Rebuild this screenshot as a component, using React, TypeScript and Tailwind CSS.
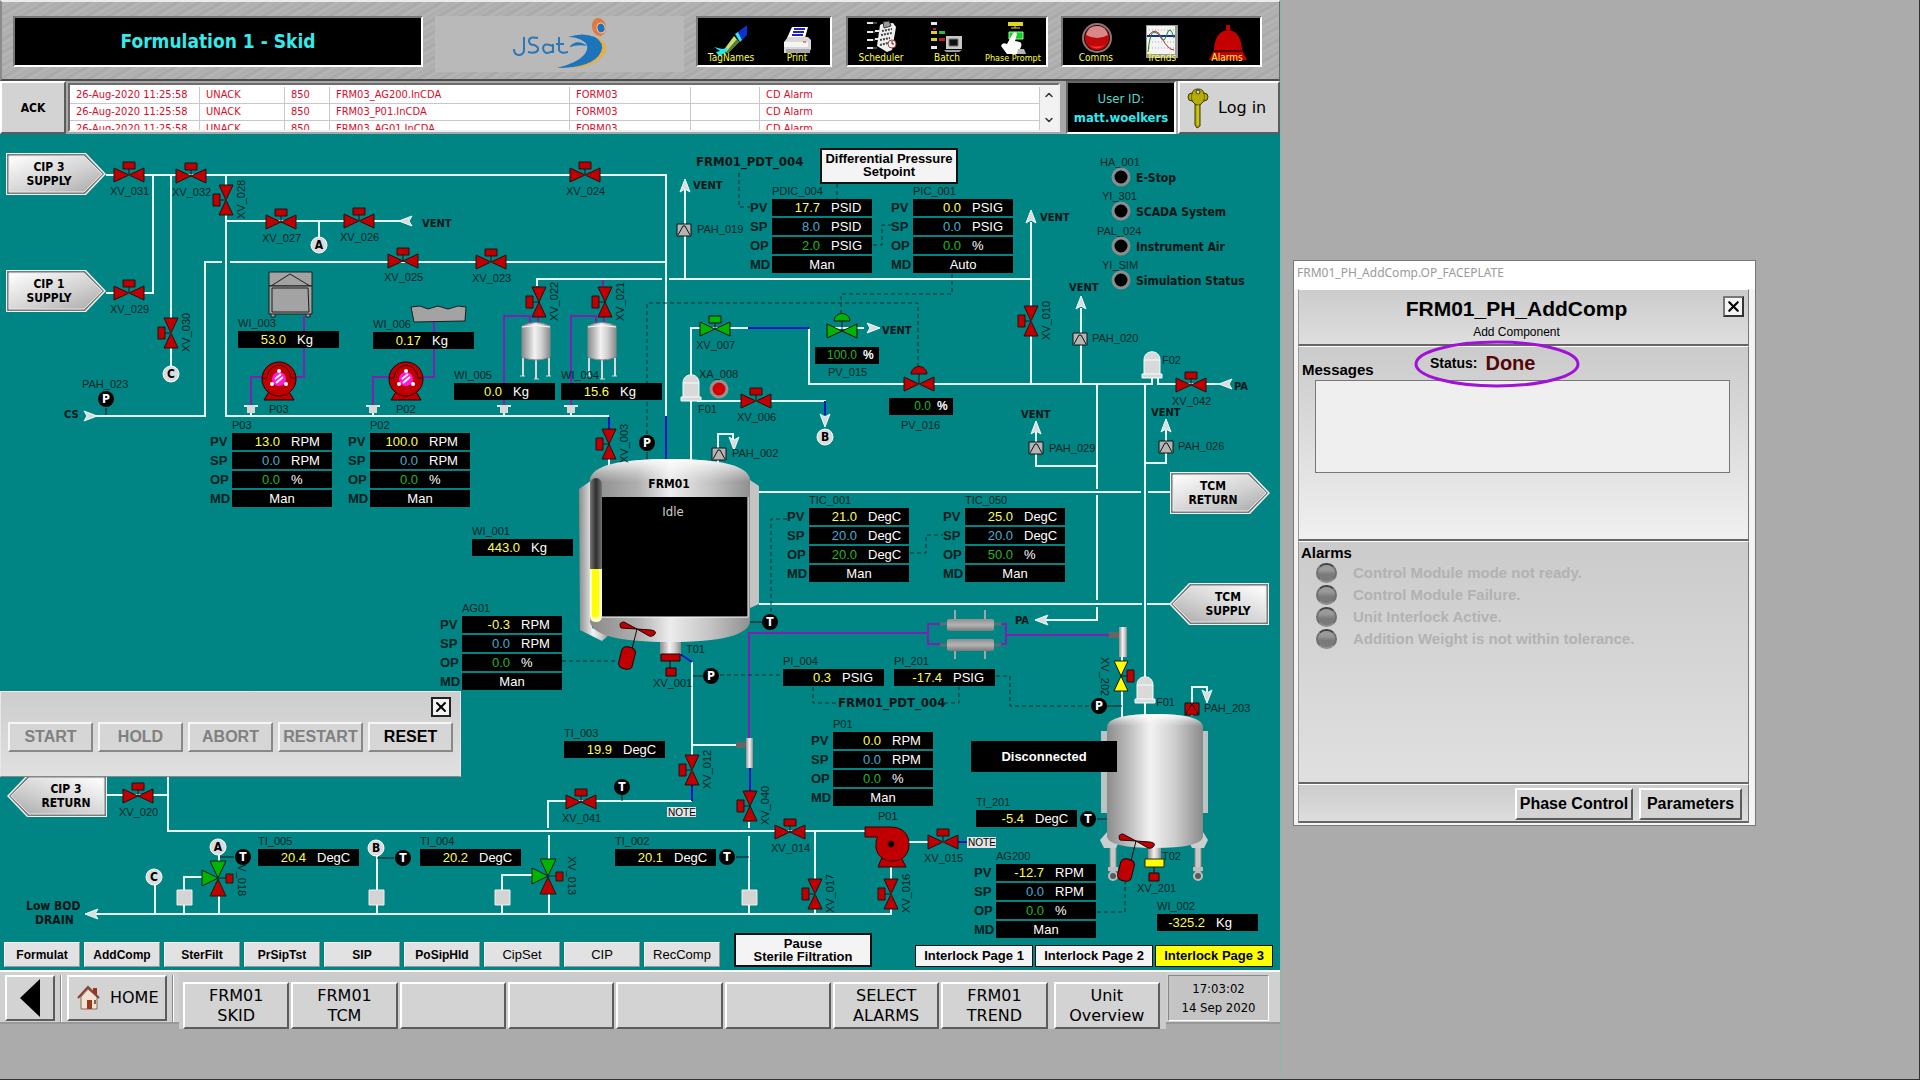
import type { ReactNode } from "react";
import clsx from "clsx";
import { ChevronDown, ChevronUp, X } from "lucide-react";

const TAHOMA = "font-['DejaVu_Sans_Condensed','DejaVu_Sans',sans-serif]";
const VERDANA = "font-['DejaVu_Sans',sans-serif]";
const RAISED =
  "border-2 border-t-white border-l-white border-b-[#5c5c5c] border-r-[#5c5c5c] bg-[#d3d3d3]";

const RED = "#c00000";
const GREEN = "#00b400";

// The mimic uses screen coordinates; the canvas itself starts below the alarm bar.
const CANVAS_TOP = 134;

/* ------------------------------------------------------------------ */
/* Mimic data                                                          */
/* ------------------------------------------------------------------ */

const WHITE_PIPES = [
  "M106 175H667M153 175V293H106M171 175V366M226 175V416H609",
  "M226 221H402M319 221V238",
  "M95 416H205V262H222M230 262H666",
  "M666 174V416",
  "M537 286V279H662M669 279H1031",
  "M685 190V279M1031 222V384M1081 308V384",
  "M691 377V328H748M809 329V384H1152V376M1158 376V384H1222",
  "M691 401V462M697 401H826M828 328H864",
  "M718 464V434H733V440M609 458V466",
  "M1036 432V466H1097M1166 430V463H1145",
  "M1097 384V489M1097 495V600M1097 607V620H1046",
  "M1145 384V716",
  "M759 492H1141M1148 492H1170M759 604H1142M1147 604H1170",
  "M692 662V786M692 745H736M692 801H548V828M549 835V862M749 822V828M749 836V914",
  "M107 795H168M168 776V831H866M815 831V914M891 866V914M908 842H959",
  "M96 914H892",
  "M155 884V914M184 914V877H204M219 855V864M219 894V914M377 855V914M502 914V875H534M549 892V914",
  "M1122 656V664M1122 690V720M1192 716V687H1207V692",
];

const BLUE_PIPES = ["M666 416V460", "M748 328H809", "M825 401V415", "M609 417V430", "M680 654L692 662", "M692 785V801", "M750 768V792", "M958 842H968"];

const PURPLE_PIPES = [
  "M304 316V377H294M264 377H251V405",
  "M434 322V377H422M390 377H373V405",
  "M537 280V288M603 280V288",
  "M504 405V316H530V323M538 316V323M571 405V316H596V323M604 316V323",
  "M749 738V633H928M942 624H928V644H942M1000 624H1006V644H1000M1006 635H1110",
];

const SIGNALS = [
  "M739 173V207H750",
  "M837 184V199",
  "M873 245H882V225H892",
  "M647 434V303H918V366",
  "M841 314V294H952V274",
  "M771 612V519H787",
  "M910 553H926V535H943",
  "M562 661H616",
  "M720 675H783",
  "M813 687V703H837",
  "M944 703H959V687",
  "M996 676H1010V706H1090",
  "M1097 912H1125V882",
];

const STEMS = ["M106 408V415", "M647 452V460", "M750 622H762", "M693 676H703", "M622 795V801", "M220 857H234", "M377 858H394", "M736 857H749", "M1107 706H1122", "M1097 819H1107"];

type ValveSpec = {
  tag: string;
  x: number;
  y: number;
  turn?: "up" | "left" | "right";
  fill?: string;
  dome?: boolean;
  tx: number;
  ty: number;
};

// tx/ty is where the tag's baseline starts
const VALVES: ValveSpec[] = [
  { tag: "XV_031", x: 129, y: 175, tx: 110, ty: 195 },
  { tag: "XV_032", x: 191, y: 176, tx: 172, ty: 196 },
  { tag: "XV_024", x: 585, y: 175, tx: 566, ty: 195 },
  { tag: "XV_028", x: 226, y: 200, turn: "left", tx: 245, ty: 219 },
  { tag: "XV_027", x: 281, y: 222, tx: 262, ty: 242 },
  { tag: "XV_026", x: 359, y: 221, tx: 340, ty: 241 },
  { tag: "XV_025", x: 403, y: 261, tx: 384, ty: 281 },
  { tag: "XV_023", x: 491, y: 262, tx: 472, ty: 282 },
  { tag: "XV_029", x: 129, y: 293, tx: 110, ty: 313 },
  { tag: "XV_030", x: 171, y: 333, turn: "left", tx: 190, ty: 352 },
  { tag: "XV_022", x: 539, y: 302, turn: "left", tx: 558, ty: 321 },
  { tag: "XV_021", x: 605, y: 302, turn: "left", tx: 624, ty: 321 },
  { tag: "XV_003", x: 609, y: 444, turn: "left", tx: 628, ty: 463 },
  { tag: "XV_007", x: 715, y: 329, fill: GREEN, tx: 696, ty: 349 },
  { tag: "XV_006", x: 756, y: 401, tx: 737, ty: 421 },
  { tag: "PV_015", x: 842, y: 331, fill: GREEN, dome: true, tx: 828, ty: 376 },
  { tag: "PV_016", x: 919, y: 384, dome: true, tx: 901, ty: 429 },
  { tag: "XV_010", x: 1031, y: 321, turn: "left", tx: 1050, ty: 340 },
  { tag: "XV_042", x: 1191, y: 385, tx: 1172, ty: 405 },
  { tag: "XV_012", x: 692, y: 770, turn: "left", tx: 711, ty: 789 },
  { tag: "XV_040", x: 750, y: 806, turn: "left", tx: 769, ty: 825 },
  { tag: "XV_041", x: 581, y: 802, tx: 562, ty: 822 },
  { tag: "XV_020", x: 138, y: 796, tx: 119, ty: 816 },
  { tag: "XV_014", x: 790, y: 832, tx: 771, ty: 852 },
  { tag: "XV_015", x: 943, y: 842, tx: 924, ty: 862 },
  { tag: "XV_017", x: 815, y: 894, turn: "left", tx: 834, ty: 913 },
  { tag: "XV_016", x: 891, y: 894, turn: "left", tx: 910, ty: 913 },
  { tag: "XV_202", x: 1121, y: 676, turn: "right", fill: "#ffff00", tx: 1101, ty: 657 },
];

const TAGS: [string, number, number][] = [
  ["PAH_023", 82, 388],
  ["P03", 269, 413],
  ["P02", 396, 413],
  ["PAH_019", 697, 233],
  ["XA_008", 699, 378],
  ["F01", 698, 413],
  ["PAH_002", 732, 457],
  ["PAH_020", 1092, 342],
  ["PAH_029", 1049, 452],
  ["PAH_026", 1178, 450],
  ["F02", 1162, 364],
  ["HA_001", 1100, 166],
  ["YI_301", 1102, 200],
  ["PAL_024", 1097, 235],
  ["YI_SIM", 1102, 269],
  ["T01", 686, 653],
  ["XV_001", 653, 687],
  ["F01", 1156, 706],
  ["PAH_203", 1204, 712],
  ["P01", 878, 820],
  ["T02", 1162, 860],
  ["XV_201", 1137, 892],
];

const BOLD_LABELS: [string, number, number][] = [
  ["VENT", 422, 227],
  ["VENT", 693, 189],
  ["VENT", 1040, 221],
  ["VENT", 882, 334],
  ["VENT", 1069, 291],
  ["VENT", 1021, 418],
  ["VENT", 1151, 416],
  ["CS", 64, 418],
  ["PA", 1234, 390],
  ["PA", 1015, 624],
];

const STATUS_LIGHTS: [string, number][] = [
  ["E-Stop", 177],
  ["SCADA System", 211],
  ["Instrument Air", 246],
  ["Simulation Status", 280],
];

const INSTRUMENTS: [string, number, number][] = [
  ["P", 106, 399],
  ["P", 647, 443],
  ["T", 770, 622],
  ["P", 711, 676],
  ["T", 622, 787],
  ["T", 243, 857],
  ["T", 403, 858],
  ["T", 727, 857],
  ["P", 1099, 706],
  ["T", 1088, 819],
];

const CONNECTORS: [string, number, number][] = [
  ["A", 319, 245],
  ["C", 171, 374],
  ["B", 825, 437],
  ["A", 218, 847],
  ["C", 154, 877],
  ["B", 376, 848],
];

type Loop = { tag: string; x: number; y: number; pv: [string, string]; sp: [string, string]; op: [string, string]; mode: string };

const LOOPS: Loop[] = [
  { tag: "PDIC_004", x: 772, y: 199, pv: ["17.7", "PSID"], sp: ["8.0", "PSID"], op: ["2.0", "PSIG"], mode: "Man" },
  { tag: "PIC_001", x: 913, y: 199, pv: ["0.0", "PSIG"], sp: ["0.0", "PSIG"], op: ["0.0", "%"], mode: "Auto" },
  { tag: "P03", x: 232, y: 433, pv: ["13.0", "RPM"], sp: ["0.0", "RPM"], op: ["0.0", "%"], mode: "Man" },
  { tag: "P02", x: 370, y: 433, pv: ["100.0", "RPM"], sp: ["0.0", "RPM"], op: ["0.0", "%"], mode: "Man" },
  { tag: "TIC_001", x: 809, y: 508, pv: ["21.0", "DegC"], sp: ["20.0", "DegC"], op: ["20.0", "DegC"], mode: "Man" },
  { tag: "TIC_050", x: 965, y: 508, pv: ["25.0", "DegC"], sp: ["20.0", "DegC"], op: ["50.0", "%"], mode: "Man" },
  { tag: "AG01", x: 462, y: 616, pv: ["-0.3", "RPM"], sp: ["0.0", "RPM"], op: ["0.0", "%"], mode: "Man" },
  { tag: "P01", x: 833, y: 732, pv: ["0.0", "RPM"], sp: ["0.0", "RPM"], op: ["0.0", "%"], mode: "Man" },
  { tag: "AG200", x: 996, y: 864, pv: ["-12.7", "RPM"], sp: ["0.0", "RPM"], op: ["0.0", "%"], mode: "Man" },
];

const READOUTS: [string, number, number, string, string][] = [
  ["WI_003", 238, 331, "53.0", "Kg"],
  ["WI_006", 373, 332, "0.17", "Kg"],
  ["WI_005", 454, 383, "0.0", "Kg"],
  ["WI_004", 561, 383, "15.6", "Kg"],
  ["WI_001", 472, 539, "443.0", "Kg"],
  ["PI_004", 783, 669, "0.3", "PSIG"],
  ["PI_201", 894, 669, "-17.4", "PSIG"],
  ["TI_003", 564, 741, "19.9", "DegC"],
  ["TI_201", 976, 810, "-5.4", "DegC"],
  ["TI_005", 258, 849, "20.4", "DegC"],
  ["TI_004", 420, 849, "20.2", "DegC"],
  ["TI_002", 615, 849, "20.1", "DegC"],
  ["WI_002", 1157, 914, "-325.2", "Kg"],
];

/* ------------------------------------------------------------------ */
/* Mimic symbols                                                       */
/* ------------------------------------------------------------------ */

function Valve({ tag, x, y, turn = "up", fill = RED, dome, tx, ty }: ValveSpec) {
  const angle = { up: 0, left: -90, right: 90 }[turn];
  const actuator = turn === "right" ? RED : fill;
  return (
    <g>
      <g transform={`translate(${x} ${y}) rotate(${angle})`} stroke="#201010">
        <path d={dome ? "M0 -11V0" : "M0 -7V0"} />
        <path d="M-15 -7V7L0 0ZM15 -7V7L0 0Z" fill={fill} />
        {dome ? <path d="M-8 -10C-7 -20 7 -20 8 -10Z" fill={fill} /> : <path d="M-6 -13H6V-6H-6Z" fill={actuator} />}
      </g>
      <text transform={`translate(${tx} ${ty}) rotate(${angle})`} className="fill-[#002626] text-[11px]">
        {tag}
      </text>
    </g>
  );
}

function ThreeWayValve({ x, y, tag, tx, ty }: { x: number; y: number; tag: string; tx: number; ty: number }) {
  return (
    <g>
      <g transform={`translate(${x} ${y})`} stroke="#102010">
        <path d="M0 0H9" />
        <path d="M-8 -17H8L0 0Z" fill={GREEN} />
        <path d="M-16 -8V8L0 0Z" fill={GREEN} />
        <path d="M-8 18H8L0 1Z" fill={RED} />
        <path d="M8 -4H15V5H8Z" fill={RED} />
      </g>
      <text transform={`translate(${tx} ${ty}) rotate(90)`} className="fill-[#002626] text-[11px]">
        {tag}
      </text>
    </g>
  );
}

function Arrow({ x, y, dir }: { x: number; y: number; dir: "up" | "down" | "left" | "right" }) {
  const angle = { up: 0, right: 90, down: 180, left: -90 }[dir];
  return (
    <path
      transform={`translate(${x} ${y}) rotate(${angle})`}
      d="M0 0L5 13L0 10L-5 13Z"
      fill="#dcdcdc"
      stroke="#e8ffff"
    />
  );
}

function Flag({ x, y, lines, flip }: { x: number; y: number; lines: [string, string]; flip?: boolean }) {
  return (
    <g transform={`translate(${x} ${y})`}>
      <g transform={flip ? "translate(100 0) scale(-1 1)" : undefined}>
        <path d="M0 0H80L100 21L80 42H0Z" fill="#f2f2f2" />
        <path d="M1 1H79L98 21L79 41H1Z" fill="#7c7c7c" />
        <path d="M3 3H78L96 21L78 39H3Z" fill="url(#flag)" stroke="#e8e8e8" />
      </g>
      <g textAnchor="middle" className={clsx(TAHOMA, "fill-black text-[12px] font-bold")}>
        <text x={flip ? 59 : 43} y={18}>{lines[0]}</text>
        <text x={flip ? 59 : 43} y={32}>{lines[1]}</text>
      </g>
    </g>
  );
}

function FilterHousing({ x, y }: { x: number; y: number }) {
  return (
    <g transform={`translate(${x} ${y})`} fill="#d9d9d9" stroke="#f4ffff">
      <path d="M-8 23V8C-8 -3 8 -3 8 8V23Z" />
      <path d="M-8 8H8" />
      <path d="M-10 22H10V26H-10Z" />
    </g>
  );
}

function PressureSwitch({ x, y, fill = "#b4b4b4" }: { x: number; y: number; fill?: string }) {
  return (
    <g transform={`translate(${x} ${y})`} stroke="#111" fill={fill}>
      <path d="M-7 -6H7V6H-7Z" />
      <path d="M-6 5L-1 -4H1L6 5" fill="none" />
    </g>
  );
}

function Cup({ x }: { x: number }) {
  return (
    <g>
      <path d={`M${x} 413V416M${x - 7} 406H${x + 7}`} stroke="#e8ffff" strokeWidth="2" />
      <path d={`M${x - 4} 405H${x + 4}V413H${x - 4}Z`} fill="#d9d9d9" />
    </g>
  );
}

function HosePump({ x, y }: { x: number; y: number }) {
  return (
    <g transform={`translate(${x} ${y})`}>
      <path d="M-9 11L-15 21H15L9 11Z" fill={RED} stroke="#200" />
      <circle r="17" fill={RED} stroke="#200" />
      <path d="M-17 -1H-12C-10 -18 10 -18 12 -1H17" fill="none" stroke="#300" />
      <circle r="7" fill="#ff1ad9" />
      <path d="M-4 0L2 -5M-3 4L4 -2" stroke="#fff" strokeWidth="2" />
      <circle cx="0" cy="-8" r="2" fill="#fff" />
      <circle cx="-7" cy="5" r="2" fill="#fff" />
      <circle cx="7" cy="5" r="2" fill="#fff" />
    </g>
  );
}

function SmallTank({ x }: { x: number }) {
  return (
    <g transform={`translate(${x} 322)`}>
      <path d="M-13 36V54M0 38V57M13 36V54" stroke="#d8d8d8" strokeWidth="2" />
      <path d="M-16 54H-11M-2 57H3M10 54H15" stroke="#d8d8d8" />
      <path d="M-14 4Q0 -3 14 4V35Q0 41 -14 35Z" fill="url(#steel)" stroke="#8d8d8d" />
      <path d="M-14 5Q0 2 14 5" stroke="#fff" fill="none" />
    </g>
  );
}

function Agitator({ x, y }: { x: number; y: number }) {
  return (
    <g transform={`translate(${x} ${y})`} fill={RED} stroke="#200">
      <path d="M0 0L-16 -1Q-19 -7 -13 -7ZM0 0L14 1Q21 2 17 6Q15 8 12 7Z" />
      <path d="M0 0L-5 20" />
      <rect x="-17" y="18" width="14" height="22" rx="5" transform="rotate(14 -10 29)" />
    </g>
  );
}

function Mimic() {
  return (
    <svg
      width="1280"
      height="836"
      viewBox={`0 ${CANVAS_TOP} 1280 836`}
      className="block font-['Liberation_Sans',Arial,sans-serif]"
      aria-hidden="true"
    >
      <defs>
        <linearGradient id="flag" x1="0" y1="0" x2="1" y2="1">
          <stop offset="0" stopColor="#ffffff" />
          <stop offset="0.6" stopColor="#d0d0d0" />
          <stop offset="1" stopColor="#a8a8a8" />
        </linearGradient>
        <linearGradient id="steel">
          <stop offset="0" stopColor="#8c8c8c" />
          <stop offset="0.25" stopColor="#c2c2c2" />
          <stop offset="0.45" stopColor="#f2f2f2" />
          <stop offset="0.7" stopColor="#cfcfcf" />
          <stop offset="1" stopColor="#8a8a8a" />
        </linearGradient>
        <linearGradient id="vessel">
          <stop offset="0" stopColor="#8a8a8a" />
          <stop offset="0.3" stopColor="#b0b0b0" />
          <stop offset="0.5" stopColor="#ececec" />
          <stop offset="0.75" stopColor="#c4c4c4" />
          <stop offset="1" stopColor="#909090" />
        </linearGradient>
        <linearGradient id="dome" x1="0" y1="0" x2="0" y2="1">
          <stop offset="0" stopColor="#ffffff" stopOpacity="0.9" />
          <stop offset="0.6" stopColor="#ffffff" stopOpacity="0.3" />
          <stop offset="1" stopColor="#ffffff" stopOpacity="0" />
        </linearGradient>
        <linearGradient id="tube" x1="0" y1="0" x2="0" y2="1">
          <stop offset="0" stopColor="#8f8f8f" />
          <stop offset="0.5" stopColor="#b4b4b4" />
          <stop offset="1" stopColor="#7a7a7a" />
        </linearGradient>
        <linearGradient id="gauge">
          <stop offset="0" stopColor="#787878" />
          <stop offset="0.5" stopColor="#2e2e2e" />
          <stop offset="1" stopColor="#747474" />
        </linearGradient>
      </defs>

      <g fill="none" stroke="#7d20b4" strokeWidth="2">
        {PURPLE_PIPES.map((d) => (
          <path key={d} d={d} />
        ))}
      </g>
      <g fill="none" stroke="#e6ffff" strokeWidth="2">
        {WHITE_PIPES.map((d) => (
          <path key={d} d={d} />
        ))}
      </g>
      <g fill="none" stroke="#0018c8" strokeWidth="2">
        {BLUE_PIPES.map((d) => (
          <path key={d} d={d} />
        ))}
      </g>
      <g fill="none" stroke="#002c2c" strokeDasharray="4 3">
        {SIGNALS.map((d) => (
          <path key={d} d={d} />
        ))}
      </g>
      <g fill="none" stroke="#1a1a1a">
        {STEMS.map((d) => (
          <path key={d} d={d} />
        ))}
      </g>

      {/* powder feeder and tray above the dosing pumps */}
      <g fill="#a3a3a3" stroke="#1c1c1c">
        <path d="M269 272H312V286H269ZM271 286L290 274L310 286" />
        <path d="M269 286H312V314H269ZM272 288H308L309 312H272ZM271 314V317H275V314M306 314V317H310V314" />
        <path d="M411 307L420 306L428 309L438 306L448 309L458 306L466 307L465 321L414 322Z" />
      </g>

      {/* main vessel with heating jacket */}
      <path d="M579 489L592 480V628L610 634L602 641L580 630Z" fill="url(#steel)" />
      <path d="M750 480L759 486V604L750 608Z" fill="#c4c4c4" />
      <path d="M660 636H681V654H660Z" fill="url(#steel)" />
      <path d="M590 479Q594 459 670 459T750 479V622Q746 642 670 642T590 622Z" fill="url(#vessel)" />
      <path d="M590 479Q594 459 670 459T750 479V482H590Z" fill="url(#dome)" />
      <rect x="590" y="478" width="12" height="144" rx="6" fill="url(#gauge)" />
      <path d="M590 569H602V616Q602 622 596 622T590 616Z" fill="#ffffc8" />
      <path d="M592 569H599V615Q598 618 595 618T592 615Z" fill="#ffff00" />
      <path d="M602 497H748V617H602Z" fill="#000" />
      <path d="M748 497V617H602" fill="none" stroke="#fff" />
      <g textAnchor="middle" className={TAHOMA}>
        <text x="669" y="488" className="fill-black text-[12px] font-bold">FRM01</text>
        <text x="673" y="516" className="fill-[#d0d0d0] text-[13px]">Idle</text>
      </g>
      <g fill={RED} stroke="#200">
        <path d="M670 661V668" />
        <path d="M661 654H680V661H661Z" />
        <path d="M666 668H676V676H666Z" />
      </g>
      <Agitator x={637} y={629} />

      {/* receiving vessel on casters */}
      <path d="M1101 731H1107V813H1101ZM1203 731H1208V813H1203Z" fill="#b9c4c4" />
      <path d="M1110 840H1116V872H1110ZM1195 840H1201V872H1195Z" fill="#c8c8c8" stroke="#8c8c8c" />
      <path d="M1107 832L1100 840L1104 848H1116L1120 840ZM1203 832L1208 840L1204 848H1192L1188 840Z" fill="#c8d0d0" />
      <g fill="#5a5a5a" stroke="#bdbdbd" strokeWidth="2">
        <circle cx="1113" cy="876" r="4" />
        <circle cx="1198" cy="876" r="4" />
        <path d="M1108 869H1118M1193 869H1203" strokeWidth="4" />
      </g>
      <path d="M1148 845H1161V859H1148Z" fill="url(#steel)" />
      <path d="M1107 726Q1110 714 1155 714T1203 726V837Q1200 848 1155 848T1107 837Z" fill="url(#steel)" />
      <path d="M1107 726Q1110 714 1155 714T1203 726Z" fill="url(#dome)" />
      <path d="M1154 867V873" stroke="#200" />
      <path d="M1145 859H1164V867H1145Z" fill="#ffff00" stroke="#222" />
      <path d="M1149 873H1159V881H1149Z" fill={RED} stroke="#200" />
      <Agitator x={1136} y={841} />

      {/* heat exchanger */}
      <g stroke="#9aa8a8">
        <path d="M955 610V619M985 610V619M955 651V659M985 651V659" strokeWidth="2" />
        <path d="M940 624H1001M940 645H1001" strokeWidth="3" stroke="#5f6f6f" />
      </g>
      <rect x="947" y="619" width="47" height="12" rx="2" fill="url(#tube)" />
      <rect x="947" y="639" width="47" height="12" rx="2" fill="url(#tube)" />

      {/* sight-glass tees */}
      <path d="M736 742H747V748H736Z" fill="#666" />
      <path d="M746 738H753V768H746Z" fill="url(#steel)" />
      <path d="M1109 632H1120V638H1109Z" fill="#666" />
      <path d="M1119 627H1127V657H1119Z" fill="url(#steel)" />

      <FilterHousing x={691} y={375} />
      <FilterHousing x={1152} y={352} />
      <FilterHousing x={1145} y={677} />
      <circle cx="719" cy="389" r="8" fill="#d40000" stroke="#9a9090" strokeWidth="3" />

      <SmallTank x={536} />
      <SmallTank x={602} />
      <HosePump x={279} y={379} />
      <HosePump x={406} y={379} />
      <Cup x={251} />
      <Cup x={373} />
      <Cup x={504} />
      <Cup x={571} />

      <PressureSwitch x={684} y={230} />
      <PressureSwitch x={719} y={454} />
      <PressureSwitch x={1080} y={339} />
      <PressureSwitch x={1036} y={448} />
      <PressureSwitch x={1166} y={447} />
      <PressureSwitch x={1192} y={709} fill={RED} />

      {/* centrifugal transfer pump */}
      <g fill={RED} stroke="#300">
        <path d="M883 855L878 867H906L900 855Z" />
        <path d="M865 827H890C904 827 909 835 909 845C909 856 900 862 891 861C881 861 875 852 876 844C876 840 877 838 878 837H865Z" />
        <circle cx="891" cy="844" r="3" fill="#000" />
      </g>

      <g fill="#d4d4d4" stroke="#eee">
        <path d="M177 890H192V905H177ZM369 890H384V905H369ZM495 890H510V905H495ZM742 890H757V905H742Z" />
      </g>

      {VALVES.map((v) => (
        <Valve key={v.tag} {...v} />
      ))}
      <ThreeWayValve x={218} y={878} tag="XV_018" tx={238} ty={857} />
      <ThreeWayValve x={548} y={876} tag="XV_013" tx={568} ty={856} />

      <Arrow x={399} y={221} dir="left" />
      <Arrow x={97} y={416} dir="right" />
      <Arrow x={880} y={328} dir="right" />
      <Arrow x={685} y={179} dir="up" />
      <Arrow x={1031} y={210} dir="up" />
      <Arrow x={1081} y={296} dir="up" />
      <Arrow x={1036} y={421} dir="up" />
      <Arrow x={1166} y={419} dir="up" />
      <Arrow x={825} y={427} dir="down" />
      <Arrow x={734} y={450} dir="down" />
      <Arrow x={1207} y={703} dir="down" />
      <Arrow x={1219} y={384} dir="left" />
      <Arrow x={1035} y={620} dir="left" />
      <Arrow x={85} y={914} dir="left" />

      <Flag x={6} y={153} lines={["CIP 3", "SUPPLY"]} />
      <Flag x={6} y={270} lines={["CIP 1", "SUPPLY"]} />
      <Flag x={1170} y={472} lines={["TCM", "RETURN"]} />
      <Flag x={1169} y={583} lines={["TCM", "SUPPLY"]} flip />
      <Flag x={7} y={775} lines={["CIP 3", "RETURN"]} flip />

      <g className="fill-[#002626] text-[11px]">
        {TAGS.map(([tag, x, y]) => (
          <text key={tag + x} x={x} y={y}>{tag}</text>
        ))}
      </g>
      <g className={clsx(TAHOMA, "fill-[#001616] text-[11px] font-bold")}>
        {BOLD_LABELS.map(([label, x, y]) => (
          <text key={label + x} x={x} y={y}>{label}</text>
        ))}
      </g>
      <g className={clsx(TAHOMA, "fill-[#001616] text-[12px] font-bold")}>
        <text x="26" y="910">Low BOD</text>
        <text x="35" y="924">DRAIN</text>
        {STATUS_LIGHTS.map(([label, y]) => (
          <text key={label} x="1136" y={y + 5}>{label}</text>
        ))}
      </g>
      <g className={clsx(TAHOMA, "fill-[#001616] text-[13px] font-bold")}>
        <text x="696" y="166">FRM01_PDT_004</text>
        <text x="838" y="707">FRM01_PDT_004</text>
      </g>
      {STATUS_LIGHTS.map(([label, y]) => (
        <circle key={label} cx="1121" cy={y} r="8" fill="#000" stroke="#8c8c8c" strokeWidth="3" />
      ))}

      <g textAnchor="middle" className={clsx(TAHOMA, "text-[12px] font-bold")}>
        {INSTRUMENTS.map(([letter, x, y]) => (
          <g key={letter + x}>
            <circle cx={x} cy={y} r="8" fill="#000" />
            <text x={x} y={y + 4} fill="#fff">{letter}</text>
          </g>
        ))}
        {CONNECTORS.map(([letter, x, y]) => (
          <g key={letter + x}>
            <circle cx={x} cy={y} r="8" fill="#dcdcdc" stroke="#f4ffff" />
            <text x={x} y={y + 4} fill="#000">{letter}</text>
          </g>
        ))}
      </g>

      <path d="M667 807H696V817H667ZM967 837H996V848H967Z" fill="#e4e4e4" />
      <g textAnchor="middle" className="fill-black text-[10px]">
        <text x="682" y="816">NOTE</text>
        <text x="982" y="846">NOTE</text>
      </g>
    </svg>
  );
}

/* ------------------------------------------------------------------ */
/* Readouts placed on the mimic                                        */
/* ------------------------------------------------------------------ */

function Cell({ value, unit, tone }: { value: string; unit: string; tone: string }) {
  return (
    <div className="flex h-[17px] bg-black text-[13px] leading-[17px]">
      <span className={clsx("w-12 text-right", tone)}>{value}</span>
      <span className="ml-[11px] text-white">{unit}</span>
    </div>
  );
}

function Tag({ children }: { children: ReactNode }) {
  return <div className="text-[11px] leading-[12px] text-[#002626]">{children}</div>;
}

function LoopBlock({ loop }: { loop: Loop }) {
  return (
    <div className="absolute" style={{ left: loop.x - 22, top: loop.y - CANVAS_TOP - 14 }}>
      <div className="pb-[2px] pl-[22px]">
        <Tag>{loop.tag}</Tag>
      </div>
      <div className="grid grid-cols-[22px_100px] gap-y-[2px] text-[13px] leading-[17px]">
        <b className="text-[#002020]">PV</b>
        <Cell value={loop.pv[0]} unit={loop.pv[1]} tone="text-[#ffff50]" />
        <b className="text-[#002020]">SP</b>
        <Cell value={loop.sp[0]} unit={loop.sp[1]} tone="text-[#48aed0]" />
        <b className="text-[#002020]">OP</b>
        <Cell value={loop.op[0]} unit={loop.op[1]} tone="text-[#28b428]" />
        <b className="text-[#002020]">MD</b>
        <div className="bg-black text-center text-white">{loop.mode}</div>
      </div>
    </div>
  );
}

function PercentOut({ x, y, value }: { x: number; y: number; value: string }) {
  return (
    <div
      className="absolute flex h-[17px] w-16 bg-black text-[12px] leading-[17px]"
      style={{ left: x, top: y - CANVAS_TOP }}
    >
      <span className="w-[42px] text-right text-[#28b428]">{value}</span>
      <span className="ml-[6px] font-bold text-white">%</span>
    </div>
  );
}

function CommandPopup() {
  const commands = ["START", "HOLD", "ABORT", "RESTART", "RESET"];
  return (
    <div className="absolute top-[557px] left-0 w-[461px] border border-[#e8e8e8] border-b-[#888] bg-linear-to-b from-[#cdcdcd] to-[#e0e0e0] pt-[5px] pr-[7px] pb-6 pl-[7px]">
      <div className="flex justify-end">
        <button type="button" aria-label="Close" className="mr-[2px] flex size-5 items-center justify-center border-2 border-[#222] bg-[#f4f4f4] text-black">
          <X size={16} strokeWidth={3} />
        </button>
      </div>
      <div className="mt-[5px] flex gap-[5px]">
        {commands.map((c) => (
          <button
            key={c}
            type="button"
            disabled={c !== "RESET"}
            className="h-[30px] flex-1 border-2 border-t-[#f6f6f6] border-r-[#888] border-b-[#888] border-l-[#f6f6f6] bg-[#d6d6d6] text-[16px] leading-5 font-bold text-black disabled:text-[#808080]"
          >
            {c}
          </button>
        ))}
      </div>
    </div>
  );
}

/* ------------------------------------------------------------------ */
/* Top bars                                                            */
/* ------------------------------------------------------------------ */

const ICONS: Record<string, ReactNode> = {
  TagNames: (
    <>
      <path d="M37 14L46 7V17L41 22Z" fill="#1030d0" />
      <path d="M34 16L37 14L41 22L39 24Z" fill="#30e0ff" />
      <path d="M33 18L38 24L27 35L22 33Z" fill="#c8e070" />
      <path d="M36 21L38 24L27 35L25 34Z" fill="#508030" />
      <path d="M13 29L21 31L27 30L24 35L18 38L15 34L19 33Z" fill="#20e8f8" />
    </>
  ),
  Print: (
    <>
      <path d="M25 9H41L38 20H20Z" fill="#fff" />
      <path d="M27 11H38M26 14H37M25 17H36" stroke="#2020c0" strokeWidth="2" />
      <path d="M17 24L21 19H41L44 22V31L42 35H17Z" fill="#d8d8d8" />
      <path d="M17 24H41V29H17Z" fill="#f4f4f4" />
      <path d="M19 31H43V35H19Z" fill="#a8a8a8" />
      <path d="M36 24H39" stroke="#e02020" />
    </>
  ),
  Scheduler: (
    <>
      <path d="M16 4H22V6H16ZM16 13H22V15H16ZM16 21H22V23H16ZM16 29H22V31H16ZM24 12H28V14H24ZM24 20H28V22H24Z" fill="#e8e8e8" />
      <path d="M22 5H26M22 14H24M22 22H24M22 30H26" stroke="#888" />
      <path d="M29 7L31 6L42 5L45 9L41 32L36 34L26 28Z" fill="#f0f0f0" />
      <path d="M32 4L38 3L40 8L33 10Z" fill="#9a9a9a" stroke="#333" />
      <path d="M31 13L41 11M30 17L41 15M29 22L39 20M29 27L37 25" stroke="#444" strokeDasharray="2 1" strokeWidth="2" />
      <circle cx="41" cy="26" r="4" fill="#fff" stroke="#c03030" />
      <path d="M41 23V26H43" stroke="#222" fill="none" />
    </>
  ),
  Batch: (
    <>
      <path d="M14 4H20V7H14ZM14 28H20V31H14Z" fill="#e8e8e8" />
      <path d="M16 10H19V12H16ZM22 20H28V23H22Z" fill="#b02020" />
      <path d="M14 13H20V16H14ZM14 20H20V23H14Z" fill="#d8d020" />
      <path d="M22 13H28V16H22Z" fill="#20c040" />
      <path d="M29 18H45V31H29Z" fill="#c8c8c8" />
      <path d="M32 21H41V28H32Z" fill="#111" stroke="#777" />
      <path d="M27 32H45L42 34H29Z" fill="#a0a0a0" />
    </>
  ),
  "Phase Prompt": (
    <>
      <path d="M25 4H40V8H25Z" fill="#e0d820" />
      <path d="M32 8V10M28 10H37" stroke="#e0d820" />
      <path d="M26 14H40V21H26Z" fill="#10d020" stroke="#9f9" />
      <path d="M30 15Q33 13 34 16L32 23L37 24Q40 26 37 31L34 36H24L18 28Q19 24 24 26Z" fill="#fff" />
      <path d="M35 31H41L43 36H34Z" fill="#b8b8b8" />
    </>
  ),
  Comms: (
    <>
      <circle cx="31" cy="20" r="15" fill="#8a7878" />
      <circle cx="31" cy="20" r="13" fill="#300808" />
      <circle cx="31" cy="20" r="12" fill="#c00808" />
      <path d="M20 17Q22 8 31 8T42 17Q31 23 20 17Z" fill="#d88888" />
      <path d="M23 27Q31 34 39 27Q31 30 23 27Z" fill="#ff3030" />
    </>
  ),
  Trends: (
    <>
      <path d="M14 7H46V40H14Z" fill="#9a9a9a" />
      <path d="M15 8H43V36H15Z" fill="#f4f4f4" />
      <path d="M17 12H42M17 24H42M17 30H42" stroke="#aaa" strokeDasharray="1 2" />
      <path d="M15 18H43" stroke="#1030a0" strokeWidth="2" />
      <path d="M16 34Q18 14 22 14T29 20T35 16T42 20" fill="none" stroke="#208020" />
      <path d="M17 17Q24 8 30 20T42 32" fill="none" stroke="#b03030" />
    </>
  ),
  Alarms: (
    <>
      <path d="M29 7H33V12H29Z" fill="#c00000" />
      <path d="M17 32Q18 13 31 12Q44 13 45 32L50 42H12Z" fill="#c40000" />
      <path d="M16 33H46" stroke="#500" strokeWidth="2" />
    </>
  ),
};

function IconPanel({ names, className }: { names: string[]; className: string }) {
  return (
    <div
      className={clsx(
        "flex h-[51px] border-2 border-t-[#777] border-r-white border-b-white border-l-[#777] bg-black",
        className,
      )}
    >
      {names.map((name) => (
        <button key={name} type="button" className="grid flex-1 justify-items-center">
          <svg width="60" height="47" viewBox="0 0 60 47" className="col-start-1 row-start-1" aria-hidden="true">
            {ICONS[name]}
          </svg>
          <span
            className={clsx(
              TAHOMA,
              "col-start-1 row-start-1 self-end whitespace-nowrap leading-[14px] text-[#ffff40]",
              name === "Phase Prompt" ? "text-[9px]" : "text-[10px]",
            )}
          >
            {name}
          </span>
        </button>
      ))}
    </div>
  );
}

function Logo() {
  return (
    <svg width="100" height="54" viewBox="0 0 100 54" role="img" aria-label="JSat">
      <g fill="none" stroke="#2b78b8" strokeWidth="2">
        <path d="M13 21V35Q12 39 8 39Q3 39 3 33" />
        <path d="M27 22Q18 20 18 25Q18 29 23 29Q28 31 27 34Q25 38 17 36" />
        <path d="M42 28V37M42 30Q33 26 32 32Q33 40 42 35M48 21V34Q49 38 57 36" />
        <path d="M45 28H53" />
      </g>
      <path d="M84 20Q99 27 94 37Q86 50 60 53L72 48Q92 38 88 26Z" fill="#e2b048" />
      <path d="M57 21Q72 16 84 21Q94 27 90 36Q82 52 46 52Q66 47 73 39Q80 30 72 25Q66 21 57 21Z" fill="#1d74bd" />
      <path d="M58 31Q66 22 76 30Q68 28 58 31Z" fill="#1d74bd" />
      <ellipse cx="88" cy="11" rx="7" ry="9" fill="#e07840" transform="rotate(-15 88 11)" />
      <ellipse cx="90" cy="12" rx="4" ry="5" fill="#1d74bd" stroke="#f0d0b0" transform="rotate(-15 90 12)" />
    </svg>
  );
}

function Header() {
  return (
    <header className="flex h-[81px] gap-3 border-t-2 border-r border-b-2 border-l-2 border-t-[#ececec] border-r-[#6a6a6a] border-b-[#4c4c4c] border-l-[#8a8a8a] bg-[repeating-linear-gradient(150deg,#a8a8a8_0px,#b6b6b6_3px,#adadad_6px,#b3b3b3_8px,#a8a8a8_11px)] pt-[14px] pr-[17px] pl-[11px]">
      <h1
        className={clsx(
          TAHOMA,
          "flex h-[51px] w-[410px] shrink-0 items-center justify-center border-2 border-t-[#777] border-r-white border-b-white border-l-[#777] bg-black text-[19px] font-bold text-[#35eaea]",
        )}
      >
        Formulation 1 - Skid
      </h1>
      <div className="h-[56px] min-w-0 flex-1 bg-[#b9b9b9] pl-[76px]">
        <Logo />
      </div>
      <IconPanel names={["TagNames", "Print"]} className="mr-[2px] w-[136px]" />
      <IconPanel names={["Scheduler", "Batch", "Phase Prompt"]} className="mr-[1px] w-[202px]" />
      <IconPanel names={["Comms", "Trends", "Alarms"]} className="w-[201px]" />
    </header>
  );
}

function KeyIcon() {
  return (
    <svg width="24" height="42" viewBox="0 0 24 42" aria-hidden="true">
      <g fill="#b4ac00" stroke="#3c3a00">
        <path d="M9 17H14V39L11 41L9 38Z" />
        <circle cx="6" cy="10" r="4" />
        <circle cx="18" cy="10" r="4" />
        <path d="M6 8Q6 2 12 2T18 8V14L14 18H10L6 14Z" />
        <circle cx="12" cy="5" r="2" fill="#d3d3d3" />
      </g>
      <path d="M6 10H18" stroke="#b4ac00" strokeWidth="5" />
      <path d="M12 18V38" stroke="#e0dc40" />
    </svg>
  );
}

function AlarmBar() {
  const tags = ["FRM03_AG200.InCDA", "FRM03_P01.InCDA", "FRM03_AG01.InCDA"];
  const cell = "truncate border-r border-b border-[#c8c8c8] px-[6px] py-0";
  return (
    <div className="flex h-[53px] bg-[#a8a8a8]">
      <button type="button" className={clsx(TAHOMA, RAISED, "w-[66px] text-[12px] font-bold text-black")}>
        ACK
      </button>
      <div className="ml-[2px] flex h-[49px] min-w-0 flex-1 self-center overflow-hidden border-2 border-t-[#6c6c6c] border-r-[#eee] border-b-[#eee] border-l-[#6c6c6c] bg-white">
        <table className={clsx(TAHOMA, "mt-[2px] h-fit flex-1 table-fixed border-separate border-spacing-0 text-[11px] leading-4 text-[#d80c2c]")}>
          <colgroup>
            <col className="w-[130px]" />
            <col className="w-[85px]" />
            <col className="w-[45px]" />
            <col className="w-[240px]" />
            <col className="w-[121px]" />
            <col className="w-[69px]" />
            <col />
          </colgroup>
          <tbody>
            {tags.map((tag) => (
              <tr key={tag}>
                <td className={cell}>26-Aug-2020 11:25:58</td>
                <td className={cell}>UNACK</td>
                <td className={cell}>850</td>
                <td className={cell}>{tag}</td>
                <td className={cell}>FORM03</td>
                <td className={cell} />
                <td className={cell}>CD Alarm</td>
              </tr>
            ))}
          </tbody>
        </table>
        <div className="flex w-[18px] flex-col items-center justify-between bg-[#f2f2f2] py-1 text-[#333]">
          <ChevronUp size={12} strokeWidth={3} />
          <ChevronDown size={12} strokeWidth={3} />
        </div>
      </div>
      <div className={clsx(TAHOMA, "ml-[6px] flex w-[110px] flex-col items-center justify-center gap-1 border-2 border-t-[#666] border-r-white border-b-white border-l-[#666] bg-black text-[13px] leading-[15px] text-[#5ad6cc]")}>
        <span>User ID:</span>
        <b className="text-[#30eaf0]">matt.woelkers</b>
      </div>
      <button type="button" className={clsx(VERDANA, RAISED, "ml-[2px] flex w-[102px] items-center gap-1 pl-[6px] text-[16px] text-black")}>
        <KeyIcon />
        <span className="pl-[4px]">Log in</span>
      </button>
    </div>
  );
}

/* ------------------------------------------------------------------ */
/* Bottom bars                                                         */
/* ------------------------------------------------------------------ */

function PhaseRow() {
  const phases = ["Formulat", "AddComp", "SterFilt", "PrSipTst", "SIP", "PoSipHld", "CipSet", "CIP", "RecComp"];
  return (
    <div className="flex h-[37px] items-end pr-[7px] pb-[3px] pl-1 text-[13px] whitespace-nowrap text-black">
      <div className="flex gap-1">
        {phases.map((p, i) => (
          <button
            key={p}
            type="button"
            className={clsx(
              "h-[25px] w-[76px] border border-t-white border-r-[#999] border-b-[#999] border-l-white bg-[#e2e2e2]",
              i < 6 ? "text-[12px] font-bold" : "text-[13px]",
            )}
          >
            {p}
          </button>
        ))}
      </div>
      <button type="button" className="ml-[14px] w-[138px] border-2 border-[#111] bg-[#f4f4f4] py-[2px] leading-[13px] font-bold">
        Pause
        <br />
        Sterile Filtration
      </button>
      <div className="ml-auto flex gap-[2px]">
        {[1, 2, 3].map((n) => (
          <button
            key={n}
            type="button"
            className={clsx("h-[22px] w-[118px] border border-[#111] font-bold", n === 3 ? "bg-[#ffff00]" : "bg-[#f4f4f4]")}
          >
            Interlock Page {n}
          </button>
        ))}
      </div>
    </div>
  );
}

function HomeIcon() {
  return (
    <svg width="24" height="26" viewBox="0 0 24 26" aria-hidden="true">
      <path d="M16 3H20V10L16 7Z" fill="#a03020" />
      <path d="M4 12L11 4L20 12V24H4Z" fill="#f0e4d4" stroke="#8a6a5a" />
      <path d="M1 13L11 2L22 13" fill="none" stroke="#8a4030" strokeWidth="2" />
      <path d="M10 15H15V24H10Z" fill="#a03820" />
      <path d="M17 15H19V19H17Z" fill="#806050" />
    </svg>
  );
}

function NavBar() {
  const pages = ["FRM01 SKID", "FRM01 TCM", "", "", "", "", "SELECT ALARMS", "FRM01 TREND", "Unit Overview"];
  return (
    <nav className={clsx(VERDANA, "flex items-start text-[16px] leading-5 text-black")}>
      <div className="flex h-[54px] w-[179px] border-t-2 border-b-2 border-white border-b-[#999] bg-[#d0d0d0] pt-[3px] pl-[5px]">
        <button type="button" aria-label="Previous page" className={clsx(RAISED, "flex h-[46px] w-[51px] items-center justify-center")}>
          <svg width="20" height="38" viewBox="0 0 20 38" aria-hidden="true">
            <path d="M20 0V38L0 19Z" />
          </svg>
        </button>
        <div className="mx-[5px] w-[2px] border-l border-[#888] bg-white" />
        <button type="button" className={clsx(RAISED, "flex h-[46px] w-[102px] items-center gap-[9px] pl-2")}>
          <HomeIcon />
          HOME
        </button>
        <div className="mx-[5px] w-[2px] border-l border-[#888] bg-white" />
      </div>
      <div className="flex h-[59px] min-w-0 flex-1 gap-[2px] border-t-2 border-white bg-[#cbcbcb] pt-[10px] pr-[6px] pl-1">
        {pages.map((p, i) => (
          <button
            key={p + i}
            type="button"
            aria-label={p || "Unassigned page"}
            className={clsx(RAISED, "flex h-[47px] flex-1 flex-col items-center justify-center", i === 8 && "ml-1")}
          >
            {p.split(" ").map((word) => (
              <span key={word}>{word}</span>
            ))}
          </button>
        ))}
      </div>
      <div className="h-[54px] w-[114px] border-t-2 border-b-2 border-white border-b-[#999] bg-[#d0d0d0] pt-[3px] pl-[2px]">
        <div className={clsx(TAHOMA, "flex h-[46px] w-[101px] flex-col items-center justify-center gap-[3px] border border-t-[#888] border-r-white border-b-white border-l-[#888] bg-[#c4c4c4] text-[13px] leading-4")}>
          <span>17:03:02</span>
          <span>14 Sep 2020</span>
        </div>
      </div>
    </nav>
  );
}

/* ------------------------------------------------------------------ */
/* Phase faceplate                                                     */
/* ------------------------------------------------------------------ */

const PANE =
  "border border-b-2 border-t-white border-l-[#999] border-r-[#777] border-b-[#666] bg-linear-to-b";

function Faceplate() {
  const alarms = [
    "Control Module mode not ready.",
    "Control Module Failure.",
    "Unit Interlock Active.",
    "Addition Weight is not within tolerance.",
  ];
  return (
    <section className="mt-[260px] ml-3 h-fit w-[463px] border border-[#777] bg-[#f4f4f4] pr-[6px] pb-[2px] pl-1 text-black">
      <div className="-mr-[6px] -ml-1 h-7 bg-white pl-[3px] font-['Noto_Sans',sans-serif] text-[12px] leading-[24px] text-[#9a9a9a]">
        FRM01_PH_AddComp.OP_FACEPLATE
      </div>
      <div className={clsx(PANE, "grid h-[57px] grid-cols-[32px_1fr_32px] from-[#cccccc] to-[#dedede]")}>
        <div className="col-start-2 pt-[7px] pr-[14px] text-center">
          <h2 className="text-[21px] leading-6 font-bold">FRM01_PH_AddComp</h2>
          <p className="text-[12px] leading-[23px]">Add Component</p>
        </div>
        <button type="button" aria-label="Close" className="mt-[6px] ml-[7px] flex size-[21px] items-center justify-center border-2 border-[#333] border-t-[#777] border-l-[#777] bg-[#f4f4f4]">
          <X size={17} strokeWidth={3} />
        </button>
      </div>
      <div className={clsx(PANE, "relative h-[195px] from-[#cbcbcb] to-[#f0f0f0]")}>
        <label htmlFor="messages" className="absolute top-[14px] left-[3px] text-[15px] leading-[18px] font-bold">
          Messages
        </label>
        <div className="flex items-center gap-2 pt-1 pl-[131px] font-bold">
          <span className="text-[14px] leading-6">Status:</span>
          <span className="text-[20px] leading-6 text-[#520606]">Done</span>
        </div>
        <textarea
          id="messages"
          readOnly
          className="mt-[5px] ml-4 block h-[93px] w-[415px] resize-none border border-[#777] bg-[#efefef]"
        />
        <svg width="166" height="48" viewBox="0 0 166 48" className="absolute -top-[7px] left-[115px]" aria-hidden="true">
          <ellipse cx="83" cy="24" rx="81" ry="22" fill="none" stroke="#a012d8" strokeWidth="3" />
        </svg>
      </div>
      <div className={clsx(PANE, "h-[243px] from-[#cbcbcb] to-[#e0e0e0] pl-[2px]")}>
        <h3 className="pt-[2px] text-[15px] leading-[18px] font-bold">Alarms</h3>
        <ul className="text-[15px] font-bold text-[#b2b2b2]">
          {alarms.map((a) => (
            <li key={a} className="flex h-[22px] items-center pl-[15px]">
              <span className="h-[20px] w-[21px] rounded-full border-2 border-t-[#444] border-r-[#707070] border-b-[#909090] border-l-[#707070] bg-linear-to-b from-[#9a9a9a] from-30% to-[#7a7a7a] to-60%" />
              <span className="ml-4">{a}</span>
            </li>
          ))}
        </ul>
      </div>
      <div className={clsx(PANE, "flex h-[39px] justify-end gap-[6px] from-[#cccccc] to-[#dedede] pt-[3px] pr-[6px] text-[16px] font-bold")}>
        <button type="button" className={clsx(RAISED, "h-8 w-[118px] whitespace-nowrap")}>
          Phase Control
        </button>
        <button type="button" className={clsx(RAISED, "h-8 w-[103px]")}>
          Parameters
        </button>
      </div>
    </section>
  );
}

export default function App() {
  return (
    <div className="flex min-h-screen items-start overflow-x-hidden border-r border-b border-[#333] bg-[#ababab] font-['Liberation_Sans',Arial,sans-serif]">
      <main className="w-[1281px] shrink-0 self-stretch border-r border-[#8fb4b4]">
        <Header />
        <AlarmBar />
        <div className="bg-[#008484]">
          <div className="relative h-[799px]">
            <Mimic />
            {LOOPS.map((loop) => (
              <LoopBlock key={loop.tag + loop.x} loop={loop} />
            ))}
            {READOUTS.map(([tag, x, y, value, unit]) => (
              <div key={tag} className="absolute w-[101px]" style={{ left: x, top: y - CANVAS_TOP - 14 }}>
                <div className="pb-[2px]">
                  <Tag>{tag}</Tag>
                </div>
                <Cell value={value} unit={unit} tone="text-[#ffff50]" />
              </div>
            ))}
            <PercentOut x={815} y={347} value="100.0" />
            <PercentOut x={889} y={398} value="0.0" />
            <button
              type="button"
              className="absolute top-[14px] left-[820px] w-[138px] border-2 border-[#111] bg-[#f4f4f4] pt-[2px] pb-1 text-[13px] leading-[13px] font-bold whitespace-nowrap text-black"
            >
              Differential Pressure
              <br />
              Setpoint
            </button>
            <div className="absolute top-[607px] left-[971px] w-[146px] bg-black text-center text-[13px] leading-[31px] font-bold text-white">
              Disconnected
            </div>
            <CommandPopup />
          </div>
          <div className="relative">
            <PhaseRow />
          </div>
        </div>
        <NavBar />
      </main>
      <Faceplate />
    </div>
  );
}
